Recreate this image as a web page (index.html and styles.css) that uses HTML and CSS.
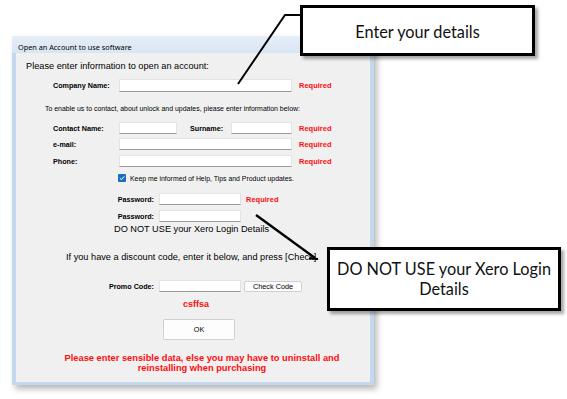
FILE: index.html
```html
<!DOCTYPE html>
<html>
<head>
<meta charset="utf-8">
<link rel="stylesheet" href="styles.css">
</head>
<body>
<div class="canvas">
  <div class="window">
    <div class="titlebar">Open an Account to use software</div>
    <div class="content">
      <div class="r r-heading">Please enter information to open an account:</div>
      <div class="r r-company">
        <span class="lbl lbl-main">Company Name:</span><span class="tb tb-long"></span><span class="req">Required</span>
      </div>
      <div class="r r-small">To enable us to contact, about unlock and updates, please enter information below:</div>
      <div class="r r-contact">
        <span class="lbl lbl-main">Contact Name:</span><span class="tb tb-contact"></span><span class="lbl lbl-sur">Surname:</span><span class="tb tb-sur"></span><span class="req">Required</span>
      </div>
      <div class="r r-email">
        <span class="lbl lbl-main">e-mail:</span><span class="tb tb-long"></span><span class="req">Required</span>
      </div>
      <div class="r r-phone">
        <span class="lbl lbl-main">Phone:</span><span class="tb tb-long"></span><span class="req">Required</span>
      </div>
      <div class="r r-check">
        <span class="cb"><svg width="8" height="8" viewBox="0 0 8 8"><rect x="0" y="0" width="8" height="8" rx="1" fill="#1a6fc4"/><path d="M1.8 4.1 L3.4 5.6 L6.3 2.4" fill="none" stroke="#fff" stroke-width="1"/></svg></span><span class="cb-text">Keep me informed of Help, Tips and Product updates.</span>
      </div>
      <div class="r r-pw1">
        <span class="lbl lbl-pw">Password:</span><span class="tb tb-pw"></span><span class="req req-pw">Required</span>
      </div>
      <div class="r r-pw2">
        <span class="lbl lbl-pw">Password:</span><span class="tb tb-pw"></span>
      </div>
      <div class="r r-warn">DO NOT USE your Xero Login Details</div>
      <div class="r r-discount">If you have a discount code, enter it below, and press [Check].</div>
      <div class="r r-promo">
        <span class="lbl lbl-pw">Promo Code:</span><span class="tb tb-pw"></span><span class="btn btn-check">Check Code</span>
      </div>
      <div class="r r-code">csffsa</div>
      <div class="r r-ok"><span class="btn btn-ok">OK</span></div>
      <div class="r r-note">Please enter sensible data, else you may have to uninstall and<br>reinstalling when purchasing</div>
    </div>
  </div>

  <svg class="arrows" width="567" height="399" viewBox="0 0 567 399">
    <polyline points="238,84 285,15 300,15" fill="none" stroke="#000" stroke-width="2"/>
    <line x1="256" y1="215" x2="315" y2="258" stroke="#000" stroke-width="2.4"/>
    <path d="M309 258.5 L318 259" fill="none" stroke="#000" stroke-width="2.2"/>
  </svg>

  <div class="callout callout-1">Enter your details</div>
  <div class="callout callout-2">DO NOT USE your Xero Login<br>Details</div>
</div>
</body>
</html>
```

FILE: styles.css
```css
html, body {
  margin: 0;
  padding: 0;
  background: #ffffff;
}

.canvas {
  position: relative;
  width: 567px;
  height: 399px;
  box-sizing: border-box;
  padding: 36px 0 0 12px;
  overflow: hidden;
  font-family: "Liberation Sans", Arial, sans-serif;
  color: #000;
}

.window {
  width: 362px;
  height: 349px;
  box-sizing: border-box;
  padding: 0 4px 3px 4px;
  background: #c3d8ef;
  box-shadow: 3px 4px 6px rgba(0, 0, 0, 0.28);
  display: flex;
  flex-direction: column;
}

.titlebar {
  height: 17px;
  box-sizing: border-box;
  margin: 0 -4px;
  padding: 5px 0 0 6px;
  background: linear-gradient(#e6eef7, #d8e5f3);
  font-family: "Noto Sans", "Liberation Sans", sans-serif;
  font-size: 7.3px;
  line-height: 12px;
  white-space: nowrap;
}

.content {
  flex: 1;
  background: #f0f0f0;
}

.r {
  display: flex;
  align-items: center;
  white-space: nowrap;
}

.r-heading {
  margin-top: 7px;
  height: 12px;
  padding-left: 10px;
  font-size: 9.2px;
}

.r-company { margin-top: 7px; height: 13px; padding-left: 37px; }
.r-small { margin-top: 11px; height: 10px; padding-left: 29px; font-size: 6.95px; }
.r-contact { margin-top: 9px; height: 12px; padding-left: 37px; }
.r-email { margin-top: 4px; height: 12px; padding-left: 37px; }
.r-phone { margin-top: 5px; height: 12px; padding-left: 37px; }
.r-check { margin-top: 5px; height: 12px; padding-left: 102px; }
.r-pw1 { margin-top: 9px; height: 12px; padding-left: 78px; }
.r-pw2 { margin-top: 5px; height: 12px; padding-left: 78px; }
.r-warn { margin-top: 1px; height: 12px; padding-left: 98px; font-size: 9.2px; }
.r-discount { margin-top: 16px; height: 12px; padding-left: 50px; font-size: 9.2px; }
.r-promo { margin-top: 17px; height: 12px; padding-left: 78px; }
.r-code { margin-top: 6px; height: 12px; padding-left: 167px; font-size: 9px; font-weight: bold; color: #ff0d0d; }
.r-ok { margin-top: 9px; height: 21px; padding-left: 147px; }
.r-note {
  margin-top: 13px;
  display: block;
  padding-left: 18px;
  text-align: center;
  font-size: 9.3px;
  line-height: 10px;
  font-weight: bold;
  color: #ff0d0d;
}

.lbl {
  font-size: 7.2px;
  font-weight: bold;
}

.lbl-main { width: 66px; }
.lbl-sur { width: 41px; margin-left: 13px; }
.lbl-pw { width: 60px; text-align: right; margin-right: 5px; }

.tb {
  display: block;
  height: 100%;
  box-sizing: border-box;
  background: #ffffff;
  border: 1px solid #e3e3e3;
  border-bottom-color: #9a9a9a;
}

.tb-long { width: 173px; }
.tb-contact { width: 58px; }
.tb-sur { width: 61px; }
.tb-pw { width: 82px; }

.req {
  margin-left: 7px;
  font-size: 7.5px;
  font-weight: bold;
  color: #ff0d0d;
}

.req-pw { margin-left: 5px; }

.cb {
  display: block;
  width: 8px;
  height: 8px;
  margin-right: 4px;
}

.cb svg { display: block; }

.cb-text { font-size: 6.9px; }

.btn {
  display: flex;
  align-items: center;
  justify-content: center;
  box-sizing: border-box;
  background: #fdfdfd;
  border: 1px solid #d0d0d0;
  border-radius: 2px;
  font-size: 7.3px;
}

.btn-check {
  width: 58px;
  height: 11px;
  margin-left: 3px;
}

.btn-ok {
  width: 72px;
  height: 21px;
}

.arrows {
  position: absolute;
  left: 0;
  top: 0;
  pointer-events: none;
}

.callout {
  position: absolute;
  box-sizing: border-box;
  background: #ffffff;
  border: 3px solid #000;
  box-shadow: 3px 3px 3px rgba(0, 0, 0, 0.35);
  display: flex;
  align-items: center;
  justify-content: center;
  text-align: center;
  font-family: Lato, "Open Sans", sans-serif;
  font-size: 16.3px;
  color: #111;
}

.callout-1 {
  left: 300px;
  top: 5px;
  width: 235px;
  height: 51px;
  padding-top: 2px;
}

.callout-2 {
  left: 327px;
  top: 247px;
  width: 234px;
  height: 64px;
  line-height: 20px;
}
```
